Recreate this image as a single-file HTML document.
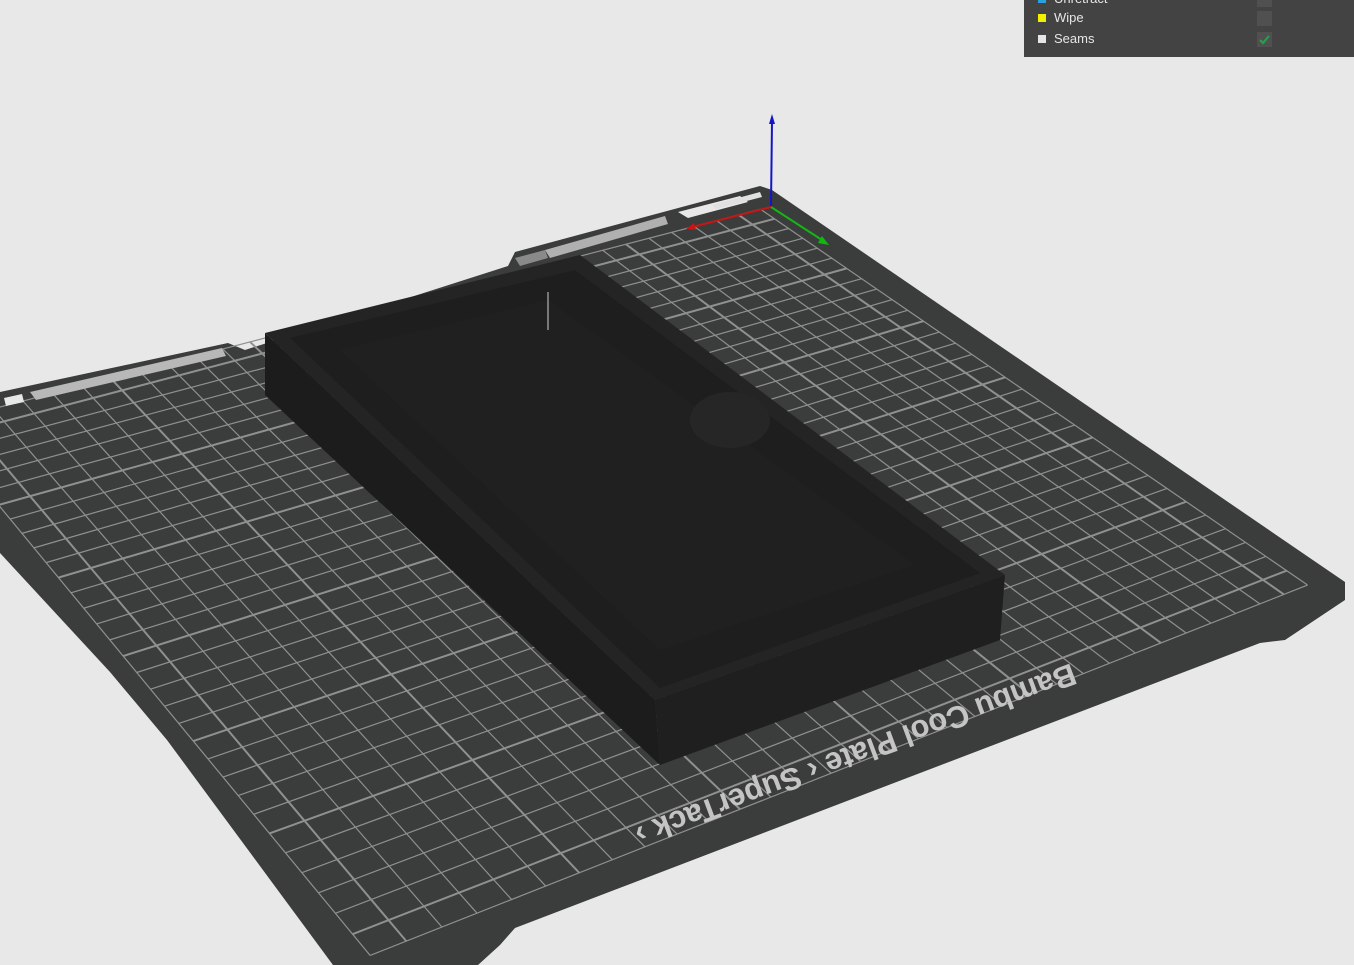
<!DOCTYPE html>
<html><head><meta charset="utf-8"><style>
html,body{margin:0;padding:0;width:1354px;height:965px;overflow:hidden;background:#e8e8e8;font-family:"Liberation Sans",sans-serif}
#panel{position:absolute;left:1024px;top:0;width:330px;height:57px;background:#434343;color:#e6e6e6;font-size:13px}
.row{position:absolute;left:14px;height:16px;line-height:16px}
.sq{position:absolute;left:0;top:4px;width:8px;height:8px}
.lbl{position:absolute;left:16px;top:0;white-space:nowrap}
.cb{position:absolute;left:219px;top:1px;width:15px;height:15px;background:#505050}
</style></head><body>
<svg id="s" width="1354" height="965" style="position:absolute;left:0;top:0">
<polygon points="0,392 228,343 245,350 508,266 515,252 760,186 772,190 1345,582 1345,600 1285,640 1260,643 515,928 500,945 478,965 333,965 167,740 110,672 0,553" fill="#3b3c3c"/>
<g id="grid" stroke="#8f9090" stroke-width="1.2" fill="none"></g>
<polygon points="30,392 222,348 226,356 36,400" fill="#b8b8b8"/>
<polygon points="4,398 22,394 24,402 6,406" fill="#e8e8e8"/>
<polygon points="545,250 665,216 668,224 550,258" fill="#b0b0b0"/>
<polygon points="515,258 545,250 548,258 520,266" fill="#8a8a8a"/>
<polygon points="678,212 740,196 748,202 688,218" fill="#e8e8e8"/>
<polygon points="712,205 760,192 762,197 716,209" fill="#e0e0e0"/>
<text x="0" y="0" transform="translate(852,745) rotate(159.5)" text-anchor="middle" font-family="Liberation Sans" font-weight="bold" font-size="31" fill="#c4c4c4">Bambu Cool Plate ‹ SuperTack ›</text>
<polygon points="265,333 655,700 660,765 265,395" fill="#1c1c1c"/>
<polygon points="655,700 1005,575 1000,640 660,765" fill="#1f1f1f"/>
<polygon points="265,333 580,255 1005,575 655,700" fill="#242424"/>
<polygon points="290,338 575,270 980,573 660,688" fill="#1e1e1e"/>
<polygon points="340,350 548,300 915,565 660,650" fill="#202020"/>
<ellipse cx="730" cy="420" rx="40" ry="28" fill="#262626"/>
<line x1="548" y1="292" x2="548" y2="330" stroke="#cfcfcf" stroke-width="1"/>
<line x1="771" y1="206" x2="772" y2="122" stroke="#1515c8" stroke-width="2"/>
<polygon points="769,124 775,124 772,114" fill="#1515c8"/>
<line x1="771" y1="207" x2="692" y2="227" stroke="#c81515" stroke-width="2"/>
<polygon points="694,223 696,230 686,229" fill="#c81515"/>
<line x1="771" y1="207" x2="822" y2="240" stroke="#15b515" stroke-width="2"/>
<polygon points="818,243 822,236 829,245" fill="#15b515"/>
</svg>
<div id="panel">
<div class="row" style="top:-9px"><div class="sq" style="background:#2aa0e0"></div><div class="lbl">Unretract</div><div class="cb"></div></div>
<div class="row" style="top:10px"><div class="sq" style="background:#f0f000"></div><div class="lbl">Wipe</div><div class="cb"></div></div>
<div class="row" style="top:31px"><div class="sq" style="background:#e6e6e6"></div><div class="lbl">Seams</div><div class="cb"><svg width="15" height="15"><path d="M3 8 L6 11 L12 4" stroke="#1fa64a" stroke-width="2" fill="none"/></svg></div></div>
</div>
<script>
var B=[768,195],R=[1350,590],F=[352,990],L=[-107,420];
var dx1=R[0]-F[0],dx2=L[0]-F[0],dx3=B[0]-R[0]+F[0]-L[0];
var dy1=R[1]-F[1],dy2=L[1]-F[1],dy3=B[1]-R[1]+F[1]-L[1];
var den=dx1*dy2-dx2*dy1;
var g=(dx3*dy2-dx2*dy3)/den,h=(dx1*dy3-dx3*dy1)/den;
var a=R[0]-B[0]+g*R[0],b=L[0]-B[0]+h*L[0],c=B[0];
var d=R[1]-B[1]+g*R[1],e=L[1]-B[1]+h*L[1],f=B[1];
function P(u,v){var w=g*u+h*v+1;return[(a*u+b*v+c)/w,(d*u+e*v+f)/w];}
var s='',m=0.028,n=33;
for(var i=0;i<n;i++){var t=m+(1-2*m)*i/(n-1);var sw=(i%5==1)?' stroke-width="2"':'';
var p=P(t,m),q=P(t,1-m);s+='<line'+sw+' x1="'+p[0]+'" y1="'+p[1]+'" x2="'+q[0]+'" y2="'+q[1]+'"/>';
p=P(m,t);q=P(1-m,t);s+='<line'+sw+' x1="'+p[0]+'" y1="'+p[1]+'" x2="'+q[0]+'" y2="'+q[1]+'"/>';}
document.getElementById('grid').innerHTML=s;
</script>
</body></html>
